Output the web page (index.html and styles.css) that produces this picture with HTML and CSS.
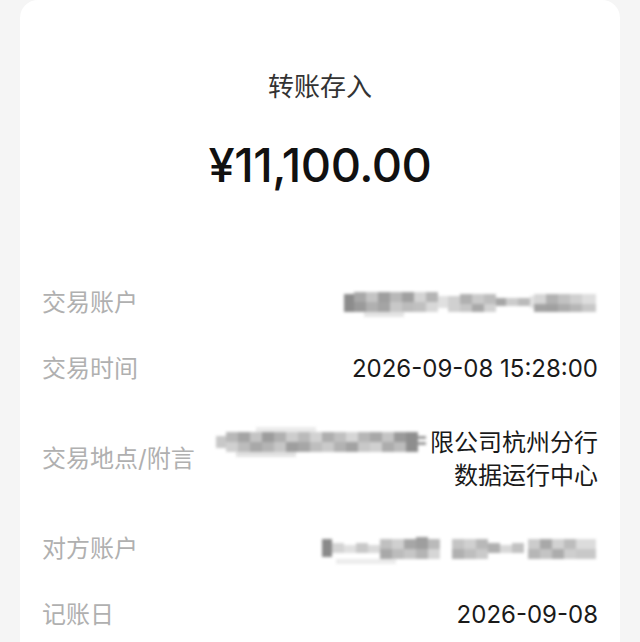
FILE: index.html
```html
<!DOCTYPE html>
<html lang="zh-CN">
<head>
<meta charset="utf-8">
<title>转账存入</title>
<link rel="stylesheet" href="styles.css">
</head>
<body>
<main class="card">
  <h1 class="title">转账存入</h1>
  <div class="amount">¥11,100.00</div>

  <section class="rows">
    <div class="row">
      <span class="label">交易账户</span>
      <span class="value">
        <svg class="mosaic" width="254" height="30" viewBox="0 0 254 30" aria-hidden="true">
          <g>
            <rect x="0" y="6" width="10" height="18" fill="#8c8c8c"/>
            <rect x="10" y="4" width="12" height="10" fill="#a8a8a8"/><rect x="10" y="14" width="12" height="10" fill="#9a9a9a"/>
            <rect x="22" y="4" width="12" height="10" fill="#c4c4c4"/><rect x="22" y="14" width="12" height="10" fill="#b0b0b0"/>
            <rect x="34" y="4" width="12" height="10" fill="#9e9e9e"/><rect x="34" y="14" width="12" height="10" fill="#a4a4a4"/>
            <rect x="46" y="4" width="12" height="10" fill="#b8b8b8"/><rect x="46" y="14" width="12" height="10" fill="#c8c8c8"/>
            <rect x="58" y="4" width="12" height="10" fill="#a0a0a0"/><rect x="58" y="14" width="12" height="10" fill="#bcbcbc"/>
            <rect x="70" y="4" width="12" height="10" fill="#d4d4d4"/><rect x="70" y="14" width="12" height="10" fill="#c0c0c0"/>
            <rect x="82" y="4" width="12" height="10" fill="#b4b4b4"/><rect x="82" y="14" width="12" height="10" fill="#d8d8d8"/>
            <rect x="94" y="8" width="10" height="12" fill="#e0e0e0"/>
            <rect x="20" y="24" width="40" height="5" fill="#e4e4e4"/>
            <rect x="104" y="8" width="12" height="16" fill="#d0d0d0"/>
            <rect x="116" y="6" width="12" height="10" fill="#b0b0b0"/><rect x="116" y="16" width="12" height="8" fill="#c6c6c6"/>
            <rect x="128" y="6" width="12" height="10" fill="#cacaca"/><rect x="128" y="16" width="12" height="8" fill="#a8a8a8"/>
            <rect x="140" y="6" width="12" height="10" fill="#bdbdbd"/><rect x="140" y="16" width="12" height="8" fill="#d2d2d2"/>
            <rect x="152" y="10" width="10" height="8" fill="#a6a6a6"/>
            <rect x="162" y="10" width="12" height="8" fill="#cccccc"/>
            <rect x="174" y="10" width="12" height="8" fill="#bababa"/>
            <rect x="186" y="8" width="4" height="12" fill="#e2e2e2"/>
            <rect x="190" y="6" width="12" height="10" fill="#d6d6d6"/><rect x="190" y="16" width="12" height="8" fill="#a2a2a2"/>
            <rect x="202" y="6" width="12" height="10" fill="#b2b2b2"/><rect x="202" y="16" width="12" height="8" fill="#a0a0a0"/>
            <rect x="214" y="6" width="12" height="10" fill="#c2c2c2"/><rect x="214" y="16" width="12" height="8" fill="#acacac"/>
            <rect x="226" y="6" width="12" height="10" fill="#d0d0d0"/><rect x="226" y="16" width="12" height="8" fill="#b6b6b6"/>
            <rect x="238" y="6" width="14" height="10" fill="#dedede"/><rect x="238" y="16" width="14" height="8" fill="#c8c8c8"/>
          </g>
        </svg>
      </span>
    </div>

    <div class="row">
      <span class="label">交易时间</span>
      <span class="value">2026-09-08 15:28:00</span>
    </div>

    <div class="row row-tall">
      <span class="label">交易地点/附言</span>
      <span class="value value-lines">
        <span class="line">
          <svg class="mosaic mosaic-tight" width="212" height="34" viewBox="0 0 212 34" aria-hidden="true">
            <g>
              <rect x="0" y="10" width="10" height="12" fill="#c8c8c8"/>
              <rect x="10" y="6" width="12" height="10" fill="#b8b8b8"/><rect x="10" y="16" width="12" height="10" fill="#d0d0d0"/>
              <rect x="22" y="6" width="12" height="10" fill="#a4a4a4"/><rect x="22" y="16" width="12" height="10" fill="#bcbcbc"/>
              <rect x="34" y="6" width="12" height="10" fill="#c4c4c4"/><rect x="34" y="16" width="12" height="10" fill="#a8a8a8"/>
              <rect x="46" y="6" width="12" height="10" fill="#9c9c9c"/><rect x="46" y="16" width="12" height="10" fill="#b4b4b4"/>
              <rect x="58" y="6" width="12" height="10" fill="#b0b0b0"/><rect x="58" y="16" width="12" height="10" fill="#c6c6c6"/>
              <rect x="70" y="6" width="12" height="10" fill="#cdcdcd"/><rect x="70" y="16" width="12" height="10" fill="#9e9e9e"/>
              <rect x="82" y="6" width="12" height="10" fill="#bababa"/><rect x="82" y="16" width="12" height="10" fill="#a6a6a6"/>
              <rect x="94" y="6" width="12" height="10" fill="#d2d2d2"/><rect x="94" y="16" width="12" height="10" fill="#bebebe"/>
              <rect x="106" y="6" width="12" height="10" fill="#aeaeae"/><rect x="106" y="16" width="12" height="10" fill="#cacaca"/>
              <rect x="118" y="6" width="12" height="10" fill="#c0c0c0"/><rect x="118" y="16" width="12" height="10" fill="#b2b2b2"/>
              <rect x="130" y="6" width="12" height="10" fill="#d6d6d6"/><rect x="130" y="16" width="12" height="10" fill="#a2a2a2"/>
              <rect x="142" y="6" width="12" height="10" fill="#b6b6b6"/><rect x="142" y="16" width="12" height="10" fill="#c8c8c8"/>
              <rect x="154" y="6" width="12" height="10" fill="#a8a8a8"/><rect x="154" y="16" width="12" height="10" fill="#d0d0d0"/>
              <rect x="166" y="6" width="12" height="10" fill="#c4c4c4"/><rect x="166" y="16" width="12" height="10" fill="#acacac"/>
              <rect x="178" y="6" width="12" height="10" fill="#9a9a9a"/><rect x="178" y="16" width="12" height="10" fill="#bcbcbc"/>
              <rect x="190" y="6" width="12" height="20" fill="#8e8e8e"/>
              <rect x="202" y="10" width="8" height="3" fill="#9a9a9a"/><rect x="202" y="16" width="8" height="3" fill="#9a9a9a"/>
              <rect x="20" y="26" width="60" height="5" fill="#e2e2e2"/>
              <rect x="40" y="1" width="60" height="5" fill="#ebebeb"/>
            </g>
          </svg>限公司杭州分行</span>
        <span class="line">数据运行中心</span>
      </span>
    </div>

    <div class="row">
      <span class="label">对方账户</span>
      <span class="value">
        <svg class="mosaic" width="276" height="32" viewBox="0 0 276 32" aria-hidden="true">
          <g>
            <rect x="0" y="6" width="10" height="18" fill="#8a8a8a"/>
            <rect x="10" y="10" width="12" height="10" fill="#d4d4d4"/>
            <rect x="22" y="12" width="12" height="8" fill="#e0e0e0"/>
            <rect x="34" y="10" width="12" height="10" fill="#c8c8c8"/>
            <rect x="46" y="12" width="12" height="8" fill="#dadada"/>
            <rect x="58" y="6" width="12" height="10" fill="#c0c0c0"/><rect x="58" y="16" width="12" height="10" fill="#a8a8a8"/>
            <rect x="70" y="6" width="12" height="10" fill="#d0d0d0"/><rect x="70" y="16" width="12" height="10" fill="#bcbcbc"/>
            <rect x="82" y="6" width="12" height="10" fill="#a6a6a6"/><rect x="82" y="16" width="12" height="10" fill="#c6c6c6"/>
            <rect x="94" y="4" width="12" height="12" fill="#9e9e9e"/><rect x="94" y="16" width="12" height="10" fill="#b4b4b4"/>
            <rect x="106" y="6" width="12" height="10" fill="#bababa"/><rect x="106" y="16" width="12" height="10" fill="#d6d6d6"/>
            <rect x="130" y="6" width="12" height="10" fill="#c4c4c4"/><rect x="130" y="16" width="12" height="10" fill="#b0b0b0"/>
            <rect x="142" y="6" width="12" height="10" fill="#d0d0d0"/><rect x="142" y="16" width="12" height="10" fill="#bebebe"/>
            <rect x="154" y="6" width="12" height="10" fill="#b8b8b8"/><rect x="154" y="16" width="12" height="10" fill="#cacaca"/>
            <rect x="166" y="10" width="12" height="10" fill="#b0b0b0"/>
            <rect x="178" y="12" width="12" height="8" fill="#d8d8d8"/>
            <rect x="190" y="10" width="12" height="10" fill="#c2c2c2"/>
            <rect x="206" y="6" width="12" height="10" fill="#cccccc"/><rect x="206" y="16" width="12" height="10" fill="#b6b6b6"/>
            <rect x="218" y="6" width="12" height="10" fill="#a8a8a8"/><rect x="218" y="16" width="12" height="10" fill="#c4c4c4"/>
            <rect x="230" y="6" width="12" height="10" fill="#d2d2d2"/><rect x="230" y="16" width="12" height="10" fill="#acacac"/>
            <rect x="242" y="6" width="12" height="10" fill="#bcbcbc"/><rect x="242" y="16" width="12" height="10" fill="#cecece"/>
            <rect x="254" y="6" width="20" height="10" fill="#dcdcdc"/><rect x="254" y="16" width="20" height="10" fill="#c8c8c8"/>
            <rect x="14" y="26" width="60" height="5" fill="#ececec"/>
          </g>
        </svg>
      </span>
    </div>

    <div class="row">
      <span class="label">记账日</span>
      <span class="value">2026-09-08</span>
    </div>
  </section>
</main>
</body>
</html>
```
FILE: styles.css
```css
* { box-sizing: border-box; }

html, body {
  margin: 0;
  padding: 0;
  background: #f5f5f5;
  font-family: "Inter", "Noto Sans CJK SC", sans-serif;
}

.card {
  margin: 0 20px;
  padding: 69px 22px 40px;
  background: #ffffff;
  border-radius: 18px 18px 0 0;
  min-height: 700px;
}

.title {
  margin: 0;
  font-size: 26px;
  line-height: 36px;
  font-weight: 400;
  color: #333333;
  text-align: center;
}

.amount {
  margin-top: 32px;
  font-size: 47px;
  line-height: 56px;
  font-weight: 500;
  color: #111111;
  text-align: center;
  letter-spacing: -0.5px;
}

.rows {
  margin-top: 77px;
  display: flex;
  flex-direction: column;
}

.row {
  display: flex;
  justify-content: space-between;
  align-items: center;
  padding: 17px 0;
  line-height: 32px;
}

.row-tall {
  padding: 24px 0;
}

.label {
  font-size: 24px;
  color: #b0b0b0;
  white-space: nowrap;
}

.value {
  font-size: 24px;
  color: #1a1a1a;
  text-align: right;
  display: flex;
  align-items: center;
}

.value-lines {
  flex-direction: column;
  align-items: flex-end;
}

.line {
  display: flex;
  align-items: center;
  white-space: nowrap;
}

.mosaic {
  display: block;
  filter: blur(1.6px);
}

.mosaic-tight {
  margin-right: 2px;
}
```
